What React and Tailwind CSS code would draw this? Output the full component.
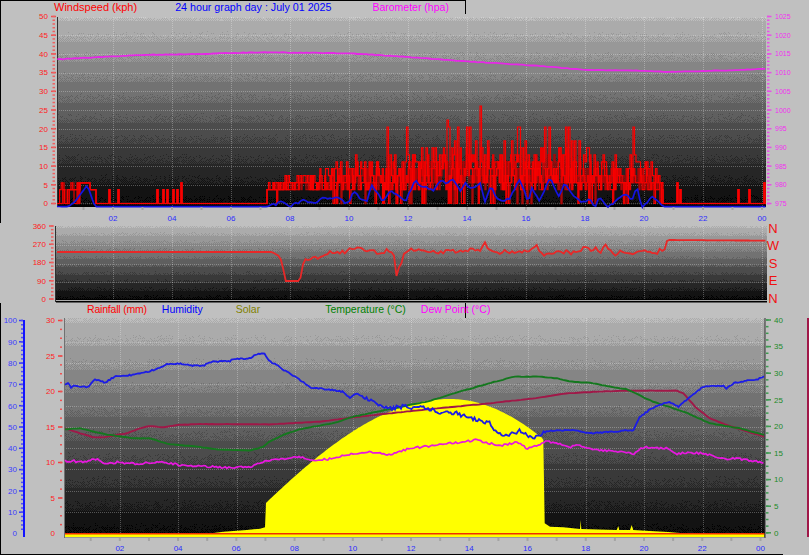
import { useMemo } from "react";

// seeded noise so the graph comes out the same every load
const rng = (seed) => {
  let s = seed >>> 0;
  return () => {
    s = (s * 1664525 + 1013904223) >>> 0;
    return s / 4294967296;
  };
};

const range = (from, to, step) => {
  const out = [];
  for (let v = from; step > 0 ? v <= to + 0.01 : v >= to - 0.01; v += step) out.push(v);
  return out;
};

// points were read off 3x crops: x / 3 + ox, y / 3 + oy
const z = (pts, ox, oy) => pts.map(([x, y]) => [x / 3 + ox, y / 3 + oy]);

const sampleAt = (pts, x) => {
  if (x <= pts[0][0]) return pts[0][1];
  for (let i = 1; i < pts.length; i++) {
    if (x <= pts[i][0]) {
      const [x0, y0] = pts[i - 1];
      const [x1, y1] = pts[i];
      return y0 + ((y1 - y0) * (x - x0)) / (x1 - x0 || 1);
    }
  }
  return pts[pts.length - 1][1];
};

const toLine = (pts) => pts.map(([x, y]) => `${x.toFixed(1)},${y.toFixed(1)}`).join(" ");

const jagged = (pts, amp, step, seed) => {
  const r = rng(seed);
  const out = [];
  for (let x = pts[0][0]; x <= pts[pts.length - 1][0]; x += step) {
    const a = typeof amp === "function" ? amp(x) : amp;
    out.push([x, sampleAt(pts, x) + (r() - 0.5) * a]);
  }
  return out;
};

// the dithered grey backdrop, palette reduced like the gif it came from
const STEP = 19;
const grey = (v) => {
  const c = Math.max(0, Math.min(255, Math.round(v))).toString(16).padStart(2, "0");
  return `#${c}${c}${c}`;
};

const buildDither = (x0, y0, w, h, top, bottom, seed) => {
  const r = rng(seed);
  const paths = {};
  const add = (v, d) => {
    const key = grey(v);
    paths[key] = (paths[key] || "") + d;
  };
  for (let y = 0; y < h; y++) {
    const v = top + ((bottom - top) * y) / (h - 1);
    const base = Math.round(v / STEP) * STEP;
    const delta = v - base;
    add(base, `M${x0} ${y0 + y}.5h${w}`);
    const other = base + (delta > 0 ? STEP : -STEP);
    const p = (2 * Math.abs(delta)) / STEP;
    for (let x = 0; x < w; x++) {
      if ((x + y) % 2 === 0 && r() < p) add(other, `M${x0 + x} ${y0 + y}.5h1`);
    }
  }
  return Object.entries(paths);
};

const Backdrop = ({ x, y, w, h, top = 184, bottom = 8, seed }) => {
  const paths = useMemo(() => buildDither(x, y, w, h, top, bottom, seed), [x, y, w, h, top, bottom, seed]);
  return (
    <g shapeRendering="crispEdges" fill="none">
      {paths.map(([color, d]) => (
        <path key={color} d={d} stroke={color} strokeWidth="1" />
      ))}
    </g>
  );
};

const Ticks = ({ ys, x1, x2, color, h = 1.5 }) => (
  <g fill={color}>
    {ys.map((y) => (
      <rect key={y} x={x1} y={y - h / 2} width={x2 - x1} height={h} />
    ))}
  </g>
);

const Labels = ({ items, x, anchor, color, size = 7 }) => (
  <g fill={color} fontSize={size} textAnchor={anchor}>
    {items.map(([label, y]) => (
      <text key={label} x={x} y={y + size * 0.36}>
        {label}
      </text>
    ))}
  </g>
);

const Grid = ({ xs, ys, x1, x2, y1, y2 }) => (
  <g stroke="#ffffff" strokeOpacity="0.28" strokeDasharray="1 1" shapeRendering="crispEdges">
    {xs.map((x) => (
      <line key={`v${x}`} x1={Math.round(x) + 0.5} x2={Math.round(x) + 0.5} y1={y1} y2={y2} />
    ))}
    {ys.map((y) => (
      <line key={`h${y}`} x1={x1} x2={x2} y1={Math.round(y) + 0.5} y2={Math.round(y) + 0.5} />
    ))}
  </g>
);

const HourAxis = ({ x0, perHour, y, labelY }) => (
  <g>
    <g fill="#a4a4a4">
      {range(1, 24, 1).map((h) => (
        <rect key={h} x={x0 + perHour * h - 1} y={y} width="2" height="3" />
      ))}
    </g>
    <g fill="#2c2cff" fontSize="8" textAnchor="middle">
      {["02", "04", "06", "08", "10", "12", "14", "16", "18", "20", "22", "00"].map((t, i) => (
        <text key={t} x={x0 + perHour * 2 * (i + 1)} y={labelY}>
          {t}
        </text>
      ))}
    </g>
  </g>
);

/* ---------- windspeed ---------- */
const W0 = 203.5;
const WU = 3.74;
const wy = (v) => W0 - v * WU;

const windEnvelope = [
  [267, 5.5], [300, 7.4], [315, 9.3], [340, 11], [370, 13], [400, 12], [415, 14], [430, 16], [460, 18],
  [490, 16], [510, 16], [530, 16], [560, 18], [586, 15], [600, 12], [620, 13], [640, 13], [655, 10], [663, 5.5],
];

const windSpikes = {
  387: 20, 407: 20, 447: 22, 449: 21, 457: 20, 466: 21, 470: 20, 480: 26, 517: 20, 519: 20, 545: 20, 549: 20,
  565: 20, 568: 20, 586: 15, 633: 20,
};

const buildGust = (seed, scale, step, dip) => {
  const r = rng(seed);
  const pts = [];
  const push = (x, v) => {
    if (pts.length) pts.push([x, pts[pts.length - 1][1]]);
    pts.push([x, wy(v)]);
  };
  // first burst just after midnight
  push(57, 0);
  for (let x = 58; x < 80; x += 1.6) push(x, r() < 0.3 ? 0 : r() < 0.2 ? 5.5 : 3.7);
  push(80, 5.5);
  push(90, 3.7);
  push(96, 0);
  // lone gusts through the small hours
  [[109, 3.7], [118, 3.7], [157, 3.7], [163, 3.7], [167, 3.7], [173, 3.7], [177, 3.7], [181, 5.5]].forEach(([x, v]) => {
    push(x, v);
    push(x + 1, 0);
  });
  // the windy part of the day
  for (let x = 267; x < 663; x += step) {
    const env = sampleAt(windEnvelope, x) * scale;
    const hit = Object.keys(windSpikes).find((k) => Math.abs(k - x) < step / 2 + 0.1);
    let v = 3.7 + Math.pow(r(), 1.2) * Math.max(env - 3.7, 0) * 1.1;
    if (r() < dip) v = 0;
    if (hit && scale === 1) v = windSpikes[hit];
    push(x, Math.round(v / 1.86) * 1.86);
  }
  push(663, 0);
  [[677, 5.5], [680, 3.7], [738, 3.7], [749, 3.7], [764, 5.5]].forEach(([x, v]) => {
    push(x, v);
    push(x + 1, 0);
  });
  push(766, 0);
  return pts;
};

const baroPts = [
  ...z([[172, 178], [285, 172], [420, 165], [600, 162], [730, 158], [810, 157]], 0, 0),
  ...z([[240, 160], [400, 170], [600, 185], [800, 197]], 270, 0),
  ...z([[140, 210], [300, 212], [380, 216], [600, 210], [678, 206]], 540, 0),
];

const windAvgPts = [
  [57, 206.5],
  ...z([[205, 620], [225, 605], [262, 555], [285, 620], [800, 620]], 0, 0),
  ...z([[40, 605], [60, 620], [100, 600], [130, 612], [160, 595], [205, 595], [235, 612], [250, 575], [290, 610], [305, 555], [340, 605], [365, 570], [405, 605], [435, 545], [490, 575], [515, 535], [530, 560], [545, 530], [570, 575], [585, 548], [600, 565], [630, 550], [645, 610], [660, 560], [690, 605], [720, 595], [750, 535], [775, 610], [785, 565], [805, 600]], 270, 0),
  ...z([[0, 595], [30, 535], [55, 590], [75, 550], [100, 590], [135, 610], [150, 595], [165, 620], [180, 590], [200, 620], [225, 605], [255, 580], [275, 600], [290, 562], [305, 620], [340, 590], [370, 620], [678, 620]], 540, 0),
];

const WindChart = () => {
  const gust = useMemo(() => buildGust(7, 1, 1.5, 0.06), []);
  const gustMid = useMemo(() => buildGust(53, 0.85, 1.2, 0.04), []);
  const gustLow = useMemo(() => buildGust(31, 0.7, 1, 0.03), []);
  const avg = useMemo(() => jagged(windAvgPts, (x) => (x > 270 && x < 660 ? 3 : 0), 2.46, 5), []);
  const baro = useMemo(() => jagged(baroPts, 0.5, 3, 9), []);
  return (
    <svg className="block w-[808px] h-[209px] overflow-visible" viewBox="1 14 808 209" fontFamily="'Liberation Sans', sans-serif">
      <Backdrop x={57} y={17} w={709} h={190} seed={11} />
      <Grid xs={range(113, 762, 59)} ys={range(16.5, 203.5, 18.7)} x1={57} x2={766} y1={17} y2={207} />
      <rect x={57} y={17} width="1" height="190" fill="#303030" />
      <polyline points={toLine(baro)} fill="none" stroke="#e628e6" strokeWidth="1.8" />
      <polyline points={toLine(gustLow)} fill="none" stroke="#a80808" strokeWidth="1.4" />
      <polyline points={toLine(gustMid)} fill="none" stroke="#e80000" strokeWidth="1.2" />
      <polyline points={toLine(gust)} fill="none" stroke="#f80000" strokeWidth="1.2" />
      <polyline points={toLine(avg)} fill="none" stroke="#1414e0" strokeWidth="1.7" />
      <Ticks ys={range(16.5, 203.5, 18.7)} x1={51} x2={56} color="#ee5050" />
      <Ticks ys={range(16.5, 203.5, 3.74)} x1={52.5} x2={55} color="#ee6060" />
      <Labels x={48} anchor="end" color="#ff2020" size={8}
        items={range(50, 0, -5).map((v, i) => [v, 16.5 + i * 18.7])} />
      <Ticks ys={range(16.5, 203.5, 18.7)} x1={767} x2={771.5} color="#e850e8" />
      <Ticks ys={range(16.5, 203.5, 3.74)} x1={767} x2={769.5} color="#e850e8" />
      <Labels x={775} anchor="start" color="#f030f0"
        items={range(1025, 975, -5).map((v, i) => [v, 16.5 + i * 18.7])} />
      <HourAxis x0={54} perHour={29.5} y={207} labelY={220.5} />
    </svg>
  );
};

/* ---------- wind direction ---------- */
const dirPts = [
  [57, 252], [272, 252], [279, 256], [283, 264], [284, 281], [300, 281], [303, 264], [306, 259], [318, 257], [330, 253], [345, 252],
  [360, 246], [364, 252], [380, 252], [390, 250], [394, 254], [396, 278], [398, 262], [400, 278], [402, 256], [410, 250], [440, 252],
  [470, 250], [482, 249], [484, 237], [486, 248], [500, 252], [530, 251], [536, 245], [540, 251],
  ...z([[10, 135], [60, 125], [110, 130], [140, 105], [155, 130], [165, 105], [180, 130], [195, 105], [225, 135], [240, 122], [280, 130], [320, 125], [350, 135], [360, 120], [372, 125], [382, 90], [680, 92]], 540, 210),
];

const DirectionChart = () => {
  const line = useMemo(() => jagged(dirPts, (x) => (x > 300 && x < 660 ? 4 : 0), 2.46, 3), []);
  const dirs = ["N", "W", "S", "E", "N"];
  return (
    <svg className="block w-[808px] h-[80px] overflow-visible" viewBox="1 223 808 80" fontFamily="'Liberation Sans', sans-serif">
      <Backdrop x={56} y={226} w={711} h={74} seed={23} />
      <Grid xs={range(113, 762, 59)} ys={[245, 264, 282]} x1={56} x2={767} y1={226} y2={300} />
      <rect x={56} y={300} width="711" height="1" fill="#aaaaaa" />
      <rect x={56} y={301} width="711" height="1.5" fill="#000000" />
      <rect x={55} y={226} width="1" height="76" fill="#303030" />
      <polyline points={toLine(line)} fill="none" stroke="#e82828" strokeWidth="1.8" />
      <Ticks ys={range(226, 299, 18.25)} x1={49} x2={53.5} color="#ee5050" />
      <Ticks ys={range(226, 299, 3.65)} x1={51} x2={53.5} color="#ee6060" />
      <Labels x={46} anchor="end" color="#ff2020" size={8}
        items={[360, 270, 180, 90, 0].map((v, i) => [v, 226 + i * 18.25])} />
      <g fill="#f01010" fontSize="13" textAnchor="middle">
        {dirs.map((d, i) => (
          <text key={i} x={773} y={232.5 + i * 17.6}>
            {d}
          </text>
        ))}
      </g>
    </svg>
  );
};

/* ---------- the lower graph ---------- */
const humidityPts = [
  ...z([[195, 165], [205, 158], [213, 175], [222, 165], [232, 170], [265, 170], [285, 148], [315, 158], [335, 145], [350, 138], [400, 135], [470, 118], [500, 102], [540, 100], [575, 107], [610, 107], [635, 95], [690, 93], [700, 87], [750, 85], [765, 75], [793, 70], [808, 93]], 0, 330),
  ...z([[20, 105], [50, 125], [90, 150], [120, 172], [150, 175], [220, 185], [240, 205], [260, 190], [310, 215], [360, 235], [400, 230], [470, 235], [500, 245], [560, 250], [600, 265], [660, 280], [680, 310], [720, 315], [750, 300], [790, 330], [808, 315]], 270, 330),
  ...z([[20, 303], [100, 300], [150, 310], [280, 300], [300, 260], [340, 232], [385, 215], [415, 230], [470, 185], [490, 170], [550, 168], [560, 175], [585, 158], [620, 152], [650, 150], [672, 138]], 540, 330),
];

const tempPts = [
  ...z([[195, 298], [240, 295], [310, 312], [400, 325], [450, 325], [510, 343], [590, 350], [650, 358], [750, 362], [790, 350], [808, 335]], 0, 330),
  ...z([[50, 310], [100, 295], [190, 280], [250, 260], [370, 235], [470, 215], [570, 185], [640, 165], [730, 140], [808, 140]], 270, 330),
  ...z([[50, 145], [90, 155], [150, 158], [210, 170], [260, 178], [340, 215], [440, 248], [510, 280], [600, 295], [672, 315]], 540, 330),
];

const crimsonPts = [
  ...z([[195, 295], [240, 310], [280, 322], [310, 322], [350, 315], [380, 310], [420, 295], [450, 288], [490, 292], [530, 285], [600, 282], [808, 283]], 0, 330),
  ...z([[150, 275], [250, 262], [360, 250], [500, 235], [640, 222], [808, 203]], 270, 330),
  ...z([[80, 190], [170, 185], [270, 182], [410, 182], [430, 190], [470, 235], [510, 265], [560, 285], [672, 320]], 540, 330),
];

const dewPts = [
  ...z([[195, 392], [210, 395], [220, 390], [230, 397], [260, 393], [290, 388], [320, 402], [350, 397], [410, 402], [450, 397], [500, 398], [540, 405], [580, 408], [640, 410], [690, 413], [750, 410], [780, 400], [800, 392], [808, 392]], 0, 330),
  ...z([[60, 385], [90, 380], [130, 390], [170, 388], [230, 375], [300, 365], [360, 375], [420, 355], [500, 345], [620, 330], [680, 345], [710, 345], [740, 335], [770, 355], [808, 343]], 270, 330),
  ...z([[15, 335], [60, 340], [90, 352], [110, 345], [150, 358], [230, 365], [280, 372], [310, 352], [380, 355], [410, 372], [450, 367], [500, 372], [560, 390], [580, 385], [640, 392], [672, 397]], 540, 330),
];

// the daylight dome: a cosine, steeper after the peak at 450
const dome = range(266, 543, 2).map((x) => {
  const span = x < 450 ? 430 : 370;
  return [x, 533 - 134 * Math.cos((Math.PI * (x - 450)) / span)];
});

const solarPts = [
  [64, 534],
  ...z([[640, 609], [670, 605], [710, 602], [740, 600], [780, 596], [795, 592]], 0, 330),
  ...dome,
  ...z([[10, 330], [14, 580], [30, 590], [70, 592], [120, 597], [122, 570], [124, 597], [230, 600], [235, 588], [238, 600], [270, 600], [275, 585], [280, 600], [330, 603], [385, 606], [420, 609], [672, 609]], 540, 330),
];

const LowerChart = () => {
  const humidity = useMemo(() => jagged(humidityPts, (x) => (x > 360 && x < 545 ? 4 : 1.2), 1.5, 13), []);
  const temp = useMemo(() => jagged(tempPts, 0.5, 3, 17), []);
  const crimson = useMemo(() => jagged(crimsonPts, 0.3, 3, 19), []);
  const dew = useMemo(() => jagged(dewPts, 2, 1.8, 29), []);
  const solar = `64,537 ${toLine(solarPts)} 764.5,534 764.5,537`;
  return (
    <svg className="block w-[808px] h-[236px] overflow-visible" viewBox="1 318 808 236" fontFamily="'Liberation Sans', sans-serif">
      <Backdrop x={64} y={318} w={701} h={219} seed={37} />
      <Grid xs={range(120, 761, 58.25)} ys={range(341.6, 533, 21.3)} x1={64} x2={765} y1={318} y2={537} />
      <polygon points={solar} fill="#ffff00" />
      <rect x={64} y={533} width="700.5" height="1.5" fill="#f03000" />
      <rect x={64} y={537} width="701" height="1" fill="#9c9c9c" />
      <rect x={64} y={318} width="1" height="220" fill="#707070" />
      <rect x={764.5} y={318} width="1" height="220" fill="#303030" />
      <polyline points={toLine(crimson)} fill="none" stroke="#a01848" strokeWidth="1.9" />
      <polyline points={toLine(temp)} fill="none" stroke="#14781e" strokeWidth="1.9" />
      <polyline points={toLine(dew)} fill="none" stroke="#e818e0" strokeWidth="1.7" />
      <polyline points={toLine(humidity)} fill="none" stroke="#1c1ce6" strokeWidth="1.8" />

      {/* humidity scale on the far left */}
      <rect x={23} y={320} width="2" height="217" fill="#1414ff" />
      <Ticks ys={range(320.5, 533, 21.3)} x1={19} x2={23} color="#3838ff" />
      <Ticks ys={range(320.5, 533, 4.26)} x1={21} x2={23} color="#5050f0" />
      <Labels x={17} anchor="end" color="#3c3cff" size={8}
        items={range(100, 0, -10).map((v, i) => [v, 320.5 + i * 21.3])} />

      {/* rainfall scale */}
      <Ticks ys={range(320.5, 533, 35.5)} x1={58} x2={62.5} color="#ee4040" />
      <Ticks ys={range(320.5, 533, 8.875)} x1={60} x2={62} color="#ee5050" />
      <Labels x={55} anchor="end" color="#ff1c1c" size={8}
        items={range(30, 0, -5).map((v, i) => [v, 320.5 + i * 35.5])} />

      {/* temperature scale */}
      <Ticks ys={range(320, 533, 26.6)} x1={766} x2={771} color="#3c9c50" />
      <Ticks ys={range(320, 533, 6.65)} x1={766} x2={768.5} color="#3c9c50" />
      <Labels x={774} anchor="start" color="#1c8a28" size={8}
        items={range(40, 0, -5).map((v, i) => [v, 320 + i * 26.6])} />

      {/* crimson scale, no labels in the original */}
      <rect x={807} y={318} width="2" height="219" fill="#a01848" />
      <HourAxis x0={61.6} perHour={29.12} y={538} labelY={551} />
    </svg>
  );
};

const Title = ({ className, children }) => (
  <span className={`shrink-0 whitespace-nowrap leading-[13px] ${className}`}>{children}</span>
);

export default function App() {
  return (
    <div className="w-[809px] h-[555px] overflow-hidden bg-[#c0c0c0] font-['Liberation_Sans',sans-serif]">
      <section className="h-[223px] border-l border-black">
        <div className="flex w-[465px] h-[14px] overflow-hidden border-t border-r border-black pl-[53px]">
          <Title className="text-[11px] text-[#ff0000]">Windspeed (kph)</Title>
          <Title className="ml-[38px] text-[10.7px] text-[#0000ff]">24 hour graph day : July 01 2025</Title>
          <Title className="ml-[41px] text-[10.5px] text-[#ff00ff]">Barometer (hpa)</Title>
        </div>
        <WindChart />
      </section>

      <section className="h-[80px] pl-px">
        <DirectionChart />
      </section>

      <section className="h-[252px] border-l border-black">
        <div className="flex w-[465px] h-[15px] border-r border-black pl-[86px] text-[10.5px]">
          <Title className="tracking-[-0.2px] text-[#ff0000]">Rainfall (mm)</Title>
          <Title className="ml-[15px] text-[#0000ff]">Humidity</Title>
          <Title className="ml-[33px] text-[#808000]">Solar</Title>
          <Title className="ml-[65px] text-[#008000]">Temperature (°C)</Title>
          <Title className="ml-[15px] text-[#ff00ff]">Dew Point (°C)</Title>
        </div>
        <LowerChart />
        <div className="w-[782px] h-px bg-black" />
      </section>
    </div>
  );
}
